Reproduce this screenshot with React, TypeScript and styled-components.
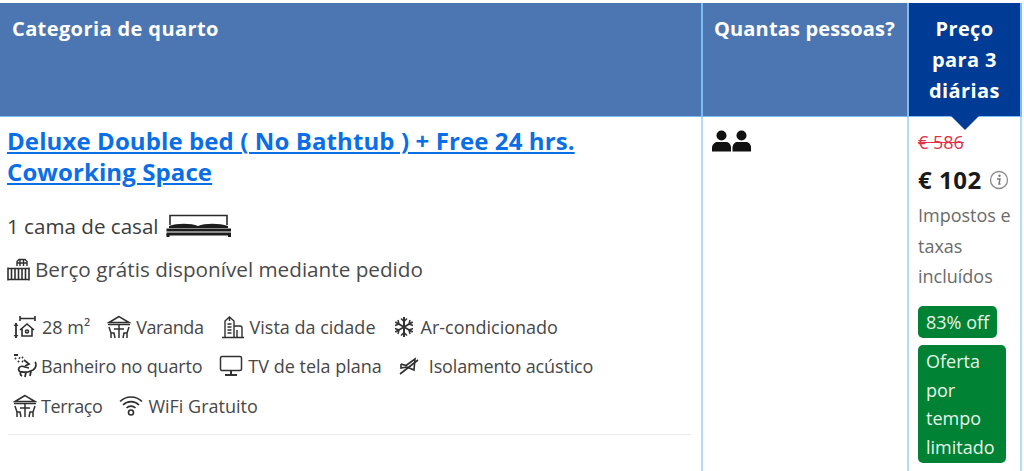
import React from "react";
import styled, { createGlobalStyle } from "styled-components";

const Global = createGlobalStyle`
  html, body { margin: 0; padding: 0; background: #fff; overflow: hidden; }
  body { font-family: "Open Sans", "Noto Sans", sans-serif; }
`;

const Table = styled.div`
  display: grid;
  grid-template-columns: 703px 206px 113px;
  grid-template-rows: 114px 354px;
  width: 1022px;
  margin-top: 3px;
  height: 468px;
`;

const HeadCell = styled.div<{ $dark?: boolean; $center?: boolean; $pl?: number; $ls?: number }>`
  background: ${(p) => (p.$dark ? "#003b95" : "#4c76b2")};
  border-right: 2px solid #7cbcf2;
  border-bottom: 1px solid #7cbcf2;
  color: #fff;
  font-weight: 700;
  font-size: 20px;
  line-height: 31px;
  letter-spacing: ${(p) => p.$ls ?? 0.4}px;
  white-space: nowrap;
  padding: 10px 0 0 ${(p) => (p.$center ? 0 : p.$pl ?? 12)}px;
  text-align: ${(p) => (p.$center ? "center" : "left")};
  position: relative;
`;

const Arrow = styled.span`
  position: absolute;
  left: 50%;
  bottom: -14px;
  margin-left: -14px;
  border-left: 14px solid transparent;
  border-right: 14px solid transparent;
  border-top: 14px solid #003b95;
`;

const BodyCell = styled.div<{ $last?: boolean }>`
  border-right: 2px solid #b5dbfa;
  padding: ${(p) => (p.$last ? "13px 0 0 9px" : "0")};
  color: #333;
  overflow: hidden;
`;

const RoomCell = styled(BodyCell)`
  padding: 9px 10px 0 7px;
`;

const GuestCell = styled(BodyCell)`
  padding: 13px 0 0 9px;
`;

const Title = styled.a`
  display: block;
  color: #0a6ee6;
  font-size: 24px;
  font-weight: 700;
  line-height: 30.5px;
  letter-spacing: 0.1px;
  text-decoration: underline;
  text-decoration-thickness: 2px;
  text-underline-offset: 2px;
  max-width: 600px;
`;

const BedRow = styled.div`
  display: flex;
  align-items: center;
  gap: 7px;
  margin-top: 23px;
  height: 32px;
  font-size: 20.6px;
  color: #3c3c3c;
`;

const CribRow = styled.div`
  display: flex;
  align-items: center;
  gap: 5px;
  margin-top: 11px;
  height: 32px;
  font-size: 20.7px;
  color: #4a4a4a;
`;

const Facilities = styled.div`
  margin: 22px 0 0 6px;
  display: flex;
  flex-direction: column;
`;

const FacRow = styled.div`
  display: flex;
  align-items: center;
  height: 39.5px;
  gap: 17px;
`;

const Fac = styled.span<{ $gap?: number; $ls?: number }>`
  display: inline-flex;
  align-items: center;
  gap: ${(p) => p.$gap ?? 5}px;
  font-size: 18px;
  letter-spacing: ${(p) => p.$ls ?? 0}px;
  color: #474747;
  white-space: nowrap;
  svg { flex: none; }
`;

const Divider = styled.hr`
  border: none;
  border-top: 1px solid #e9e9e9;
  margin: 8px 0 0 1px;
`;

const OldPrice = styled.div`
  font-size: 18px;
  line-height: 24px;
  color: #e2304a;
  text-decoration: line-through;
`;

const PriceRow = styled.div`
  display: flex;
  align-items: center;
  gap: 7px;
  margin-top: 10px;
  font-size: 24px;
  font-weight: 700;
  line-height: 32px;
  letter-spacing: 0.5px;
  color: #1a1a1a;
  white-space: nowrap;
`;

const Taxes = styled.div`
  margin-top: 4px;
  font-size: 18px;
  line-height: 30.5px;
  color: #6b6b6b;
`;

const Badge = styled.div<{ $w: number; $top: number }>`
  width: ${(p) => p.$w}px;
  margin-top: ${(p) => p.$top}px;
  background: #008234;
  color: #e6f5ea;
  font-size: 18px;
  line-height: 28.5px;
  border-radius: 5px;
  padding: 2px 0 2px 8px;
  box-sizing: border-box;
`;

const I = { stroke: "#2f2f2f", strokeWidth: 1.6, fill: "none" } as const;

const Bed = () => (
  <svg width="66" height="24" viewBox="0 0 66 24">
    <path d="M4 11V1.500H61V11" fill="none" stroke="#2b2b2b" strokeWidth="1.600" />
    <path d="M3 12c8-3 22-3 29 0c7-3 21-3 30 0v2H3z" fill="#1c1c1c" />
    <rect x="0.500" y="14.500" width="64.500" height="3" fill="#1c1c1c" />
    <rect x="0.500" y="18.500" width="64.500" height="3" fill="#1c1c1c" />
    <rect x="0.500" y="20" width="3" height="3" fill="#1c1c1c" />
    <rect x="62" y="20" width="3" height="3" fill="#1c1c1c" />
  </svg>
);

const Crib = () => (
  <svg width="23" height="23" viewBox="0 0 23 23" stroke="#2f2f2f" strokeWidth={1.400} fill="none">
    <path d="M10 8V3.500l2-2h6l2 2V8" />
    <path d="M13 2v6M16.500 2v6M10 5h10" />
    <path d="M1 10.500h21M1 21.500h21M1 9.500v13M22 9.500v13M4.500 11v10M8 11v10M11.500 11v10M15 11v10M18.500 11v10" strokeWidth="1.600" />
  </svg>
);

const Size = () => (
  <svg width="24" height="24" viewBox="0 0 24 24" {...I}>
    <path d="M7 3.500H22M7 1v5M22 1v5" />
    <path d="M3 8v15" strokeWidth="1.800" />
    <path d="M.5 11L3 8l2.500 3zM.5 20L3 23l2.500-3z" fill="#333" stroke="none" />
    <path d="M7 15l7-6 7 6M9 13.500V21h10v-7.500" />
    <circle cx="14" cy="16.500" r="1.500" />
  </svg>
);

const Terrace = () => (
  <svg width="24" height="24" viewBox="0 0 24 24" {...I} strokeWidth={1.500}>
    <path d="M12 1.500L2 7.500h20z" />
    <path d="M1 9.500h22" />
    <path d="M12 9.500v13.500M7 14h10M2 12l2 6v5M4 18h3l1 5M22 12l-2 6v5M20 18h-3l-1 5" />
  </svg>
);

const City = () => (
  <svg width="24" height="24" viewBox="0 0 24 24" {...I} strokeWidth={1.400}>
    <path d="M4 22V6l4.500-4L13 6v16" />
    <path d="M6.500 9h4M6.500 12h4M6.500 15h4M6.500 18h4M8.500 3v3" />
    <path d="M13 11h6a2 2 0 0 1 2 2v9M16 15v7" />
    <path d="M1 22.500h22" strokeWidth="1.500" />
  </svg>
);

const Snow = () => (
  <svg width="22" height="22" viewBox="0 0 22 22" stroke="#333" strokeWidth="2" fill="none">
    <path d="M11 1v20M2.300 6l17.400 10M19.700 6L2.300 16" />
    <path d="M8 2.500l3 3 3-3M8 19.500l3-3 3 3M2 9.500l4-1.500-1-4M20 12.500l-4 1.500 1 4M20 9.500l-4-1.500 1-4M2 12.500l4 1.500-1 4" strokeWidth="1.500" />
  </svg>
);

const Shower = () => (
  <svg width="26" height="24" viewBox="0 0 26 24" {...I} strokeWidth={1.800}>
    <path d="M1 1h4M2 4l1 1M6 3.500l1 1M9 3l1 1M5 7l1 1M9 7l1 1" />
    <path d="M11 6l5 4-4 2" />
    <path d="M22 8c2 2 1 6-2 8l-5 2c-2 .5-4 0-6 0-3 0-4-2-3-4s4-2 6-1l4 1" />
    <path d="M13 18l-1 5M18 17l-1 5M8 18c-1 1-1 3 1 4" />
  </svg>
);

const Tv = () => (
  <svg width="24" height="22" viewBox="0 0 24 22" stroke="#333" strokeWidth="1.500" fill="none">
    <rect x="1.500" y="1.500" width="21" height="14" rx="1.500" />
    <path d="M12 16v3M6 20h12" strokeWidth="2" />
  </svg>
);

const Sound = () => (
  <svg width="20" height="18" viewBox="0 0 20 18" {...I}>
    <path d="M2 7l5 1.500L16 2l-1 11-7-3" />
    <path d="M2 7v4l6-1M1 17L19 3" />
  </svg>
);

const Wifi = () => (
  <svg width="24" height="22" viewBox="0 0 24 22" {...I}>
    <path d="M1 6.500c6-6 16-6 22 0M4 10c4.500-4.500 11.500-4.500 16 0M7.500 13c2.500-2.500 6.500-2.500 9 0" />
    <circle cx="12" cy="17.500" r="2.500" />
  </svg>
);

const Guests = () => (
  <svg width="40" height="22" viewBox="0 0 40 22" fill="#111">
    <circle cx="9.500" cy="5.500" r="5" />
    <path d="M0 21.500v-4c0-3 3-5.500 5-5.500h9c3 0 5 2.500 5 5.500v4z" />
    <circle cx="29.500" cy="5.500" r="5" />
    <path d="M20.500 21.500v-4c0-3 2.500-5.500 4.500-5.500h9c3 0 5 2.500 5 5.500v4z" />
  </svg>
);

const Info = () => (
  <svg width="20" height="20" viewBox="0 0 20 20">
    <circle cx="10" cy="10" r="8.500" fill="none" stroke="#8a8a8a" strokeWidth="1.300" />
    <circle cx="10.500" cy="5.800" r="1.200" fill="#777" />
    <path d="M8 9h3l-1 5h1.500" fill="none" stroke="#777" strokeWidth="1.400" />
  </svg>
);

export default function App() {
  return (
    <>
      <Global />
      <Table>
        <HeadCell>Categoria de quarto</HeadCell>
        <HeadCell $pl={11} $ls={0.15}>Quantas pessoas?</HeadCell>
        <HeadCell $dark $center>
          Preço
          <br />
          para 3
          <br />
          diárias
          <Arrow />
        </HeadCell>

        <RoomCell>
          <Title href="#">
            Deluxe Double bed ( No Bathtub ) + Free 24 hrs. Coworking Space
          </Title>
          <BedRow>
            1 cama de casal <Bed />
          </BedRow>
          <CribRow>
            <Crib /> Berço grátis disponível mediante pedido
          </CribRow>
          <Facilities>
            <FacRow>
              <Fac><Size /> 28 m²</Fac>
              <Fac $ls={-0.4}><Terrace /> Varanda</Fac>
              <Fac><City /> Vista da cidade</Fac>
              <Fac $gap={6}><Snow /> Ar-condicionado</Fac>
            </FacRow>
            <FacRow>
              <Fac $gap={2} $ls={-0.17}><Shower /> Banheiro no quarto</Fac>
              <Fac><Tv /> TV de tela plana</Fac>
              <Fac $gap={10} $ls={-0.16}><Sound /> Isolamento acústico</Fac>
            </FacRow>
            <FacRow>
              <Fac $gap={4} $ls={-0.4}><Terrace /> Terraço</Fac>
              <Fac><Wifi /> WiFi Gratuito</Fac>
            </FacRow>
          </Facilities>
          <Divider />
        </RoomCell>

        <GuestCell>
          <Guests />
        </GuestCell>

        <BodyCell $last>
          <OldPrice>€ 586</OldPrice>
          <PriceRow>
            € 102 <Info />
          </PriceRow>
          <Taxes>
            Impostos e
            <br />
            taxas
            <br />
            incluídos
          </Taxes>
          <Badge $w={79} $top={14}>83% off</Badge>
          <Badge $w={88} $top={7}>
            Oferta
            <br />
            por
            <br />
            tempo
            <br />
            limitado
          </Badge>
        </BodyCell>
      </Table>
    </>
  );
}
